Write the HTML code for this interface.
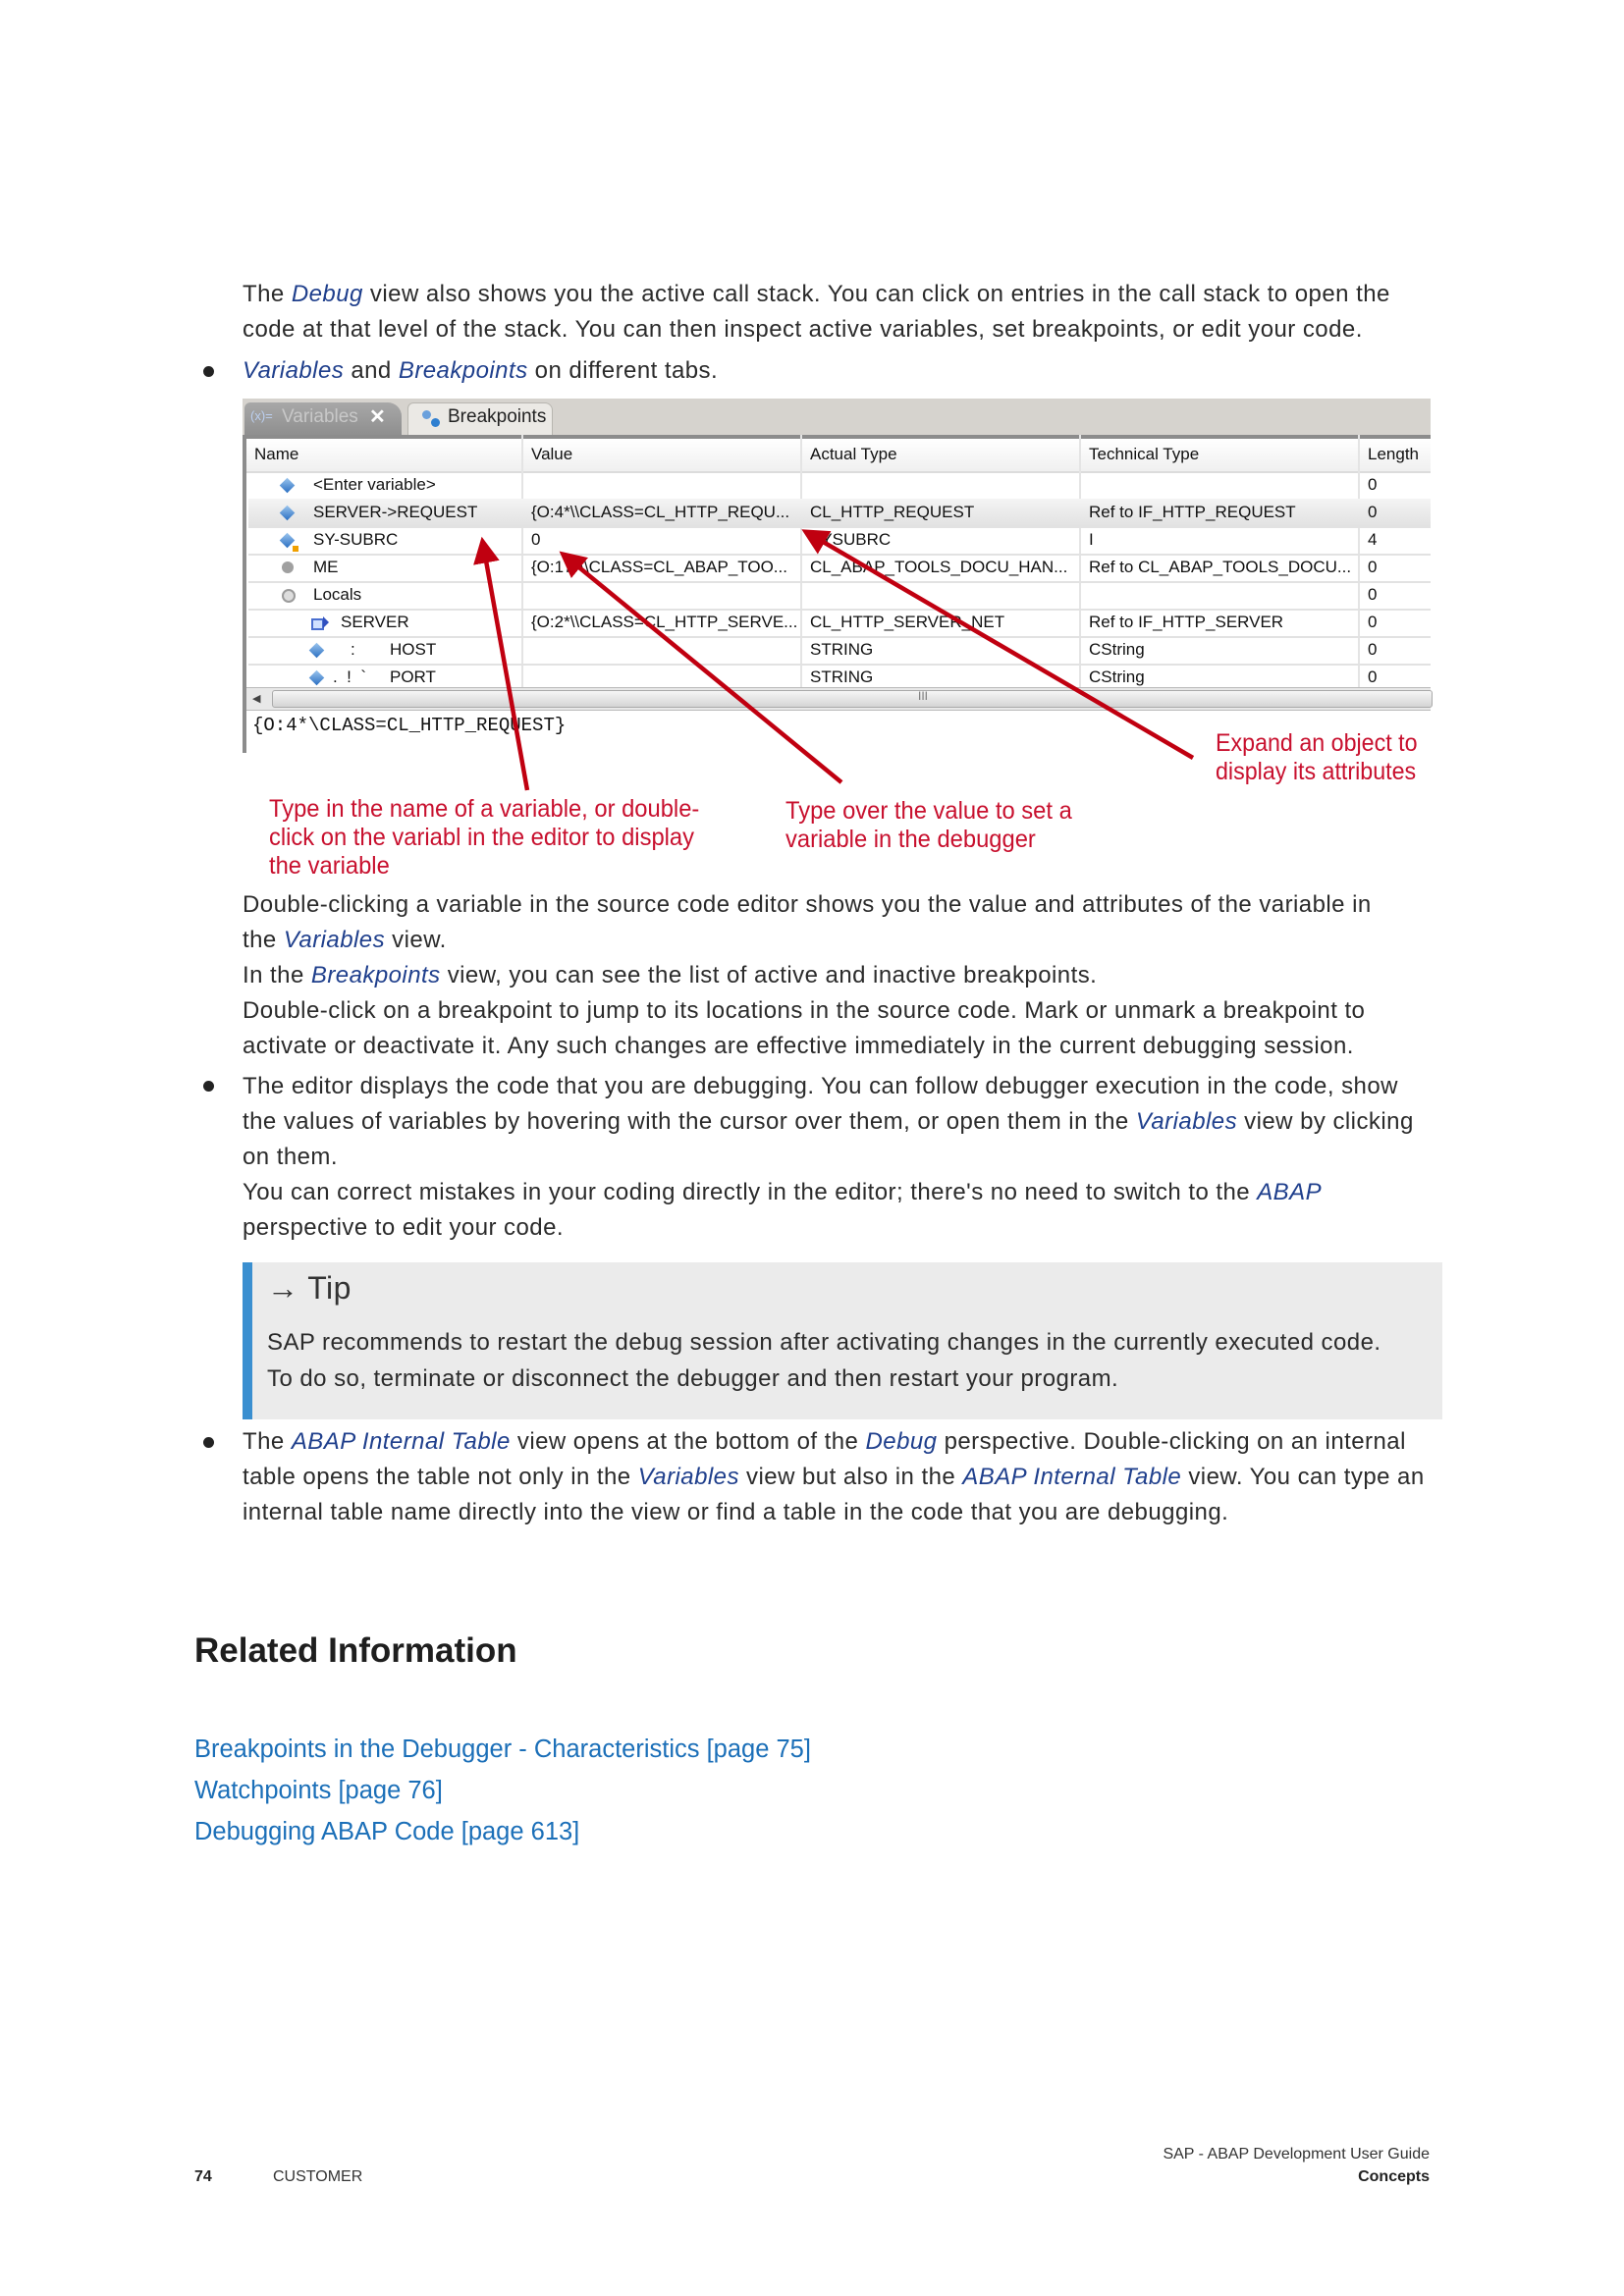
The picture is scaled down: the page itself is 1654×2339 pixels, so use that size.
<!DOCTYPE html>
<html><head><meta charset="utf-8">
<style>
html,body{margin:0;padding:0;background:#fff;}
body{width:1654px;height:2339px;position:relative;overflow:hidden;font-family:"Liberation Sans",sans-serif;color:#2b2b2b;}
.l{position:absolute;left:247px;white-space:nowrap;font-size:24px;letter-spacing:0.45px;line-height:26px;}
.b{position:absolute;left:207px;width:11px;height:11px;border-radius:50%;background:#222;}
i{color:#1f3f8c;}
.tb{position:absolute;left:247px;top:406px;width:1222px;height:361px;}
.cell{position:absolute;font-size:17px;line-height:28px;color:#111;white-space:nowrap;}
.row{position:absolute;left:6px;width:1204px;height:28px;border-bottom:2px solid #e2e2e2;}
.vl{position:absolute;top:37px;width:2px;height:260px;background:#e4e4e4;}
.ic{position:absolute;width:11px;height:11px;transform:rotate(45deg);background:linear-gradient(135deg,#9cc6ee,#2a6fc2);}
.red{position:absolute;color:#c8102e;font-size:25px;line-height:29px;white-space:nowrap;transform:scaleX(0.95);transform-origin:left top;}
.lk{position:absolute;left:198px;font-size:25.5px;color:#1b6fb8;white-space:nowrap;}
</style></head><body>

<div class="l" style="top:287px">The <i>Debug</i> view also shows you the active call stack. You can click on entries in the call stack to open the</div>
<div class="l" style="top:323px">code at that level of the stack. You can then inspect active variables, set breakpoints, or edit your code.</div>
<div class="b" style="top:373px"></div>
<div class="l" style="top:365px"><i>Variables</i> and <i>Breakpoints</i> on different tabs.</div>

<div class="tb">
  <div style="position:absolute;left:0;top:0;width:1210px;height:38px;background:#d6d3ce;"></div>
  <div style="position:absolute;left:2px;top:4px;width:160px;height:34px;background:linear-gradient(#a8a8a8,#8e8e8e);border-radius:6px 14px 0 0;"></div>
  <div style="position:absolute;left:8px;top:10px;font-size:13px;color:#bcd0f0;">(x)=</div>
  <div style="position:absolute;left:40px;top:8px;font-size:19px;color:#c8c8c8;">Variables</div>
  <div style="position:absolute;left:129px;top:6px;font-size:20px;color:#fff;font-weight:bold;">✕</div>
  <div style="position:absolute;left:168px;top:4px;width:146px;height:34px;background:#ebe9e5;border-radius:6px 8px 0 0;border:1px solid #b8b6b0;border-bottom:none;"></div>
  <div style="position:absolute;left:183px;top:12px;width:9px;height:9px;border-radius:50%;background:#6aa0dc;"></div>
  <div style="position:absolute;left:192px;top:20px;width:9px;height:9px;border-radius:50%;background:#2f7fd0;"></div>
  <div style="position:absolute;left:209px;top:8px;font-size:19px;color:#222;">Breakpoints</div>
  <div style="position:absolute;left:0;top:37px;width:1210px;height:4px;background:#8c8c8c;"></div>
  <div style="position:absolute;left:0;top:37px;width:4px;height:324px;background:#8c8c8c;"></div>
  <div style="position:absolute;left:4px;top:41px;width:1206px;height:33px;background:linear-gradient(#fff,#f0f0f0);border-bottom:2px solid #dcdcdc;"></div>
  <div class="vl" style="left:284px"></div><div class="vl" style="left:568px"></div><div class="vl" style="left:852px"></div><div class="vl" style="left:1136px"></div>
  <div class="cell" style="left:12px;top:43px">Name</div>
  <div class="cell" style="left:294px;top:43px">Value</div>
  <div class="cell" style="left:578px;top:43px">Actual Type</div>
  <div class="cell" style="left:862px;top:43px">Technical Type</div>
  <div class="cell" style="left:1146px;top:43px">Length</div>
  <div class="row" style="top:74px"></div>
  <div class="row" style="top:102px;background:linear-gradient(#f4f4f4,#e2e2e2);"></div>
  <div class="row" style="top:130px"></div>
  <div class="row" style="top:158px"></div>
  <div class="row" style="top:186px"></div>
  <div class="row" style="top:214px"></div>
  <div class="row" style="top:242px"></div>
  <div class="row" style="top:270px"></div>

  <div class="ic" style="left:40px;top:83px"></div><div class="cell" style="left:72px;top:74px">&lt;Enter variable&gt;</div>
  <div class="cell" style="left:1146px;top:74px">0</div>
  <div class="ic" style="left:40px;top:111px"></div><div class="cell" style="left:72px;top:102px">SERVER-&gt;REQUEST</div>
  <div class="cell" style="left:294px;top:102px">{O:4*\\CLASS=CL_HTTP_REQU...</div>
  <div class="cell" style="left:578px;top:102px">CL_HTTP_REQUEST</div>
  <div class="cell" style="left:862px;top:102px">Ref to IF_HTTP_REQUEST</div>
  <div class="cell" style="left:1146px;top:102px">0</div>
  <div class="ic" style="left:40px;top:139px"></div><div style="position:absolute;left:51px;top:150px;width:6px;height:6px;background:#f0a000;"></div>
  <div class="cell" style="left:72px;top:130px">SY-SUBRC</div>
  <div class="cell" style="left:294px;top:130px">0</div>
  <div class="cell" style="left:578px;top:130px">SYSUBRC</div>
  <div class="cell" style="left:862px;top:130px">I</div>
  <div class="cell" style="left:1146px;top:130px">4</div>
  <div style="position:absolute;left:40px;top:166px;width:12px;height:12px;border-radius:50%;background:#a0a0a0;"></div>
  <div class="cell" style="left:72px;top:158px">ME</div>
  <div class="cell" style="left:294px;top:158px">{O:17*\\CLASS=CL_ABAP_TOO...</div>
  <div class="cell" style="left:578px;top:158px">CL_ABAP_TOOLS_DOCU_HAN...</div>
  <div class="cell" style="left:862px;top:158px">Ref to CL_ABAP_TOOLS_DOCU...</div>
  <div class="cell" style="left:1146px;top:158px">0</div>
  <div style="position:absolute;left:40px;top:194px;width:10px;height:10px;border-radius:50%;border:2px solid #9a9a9a;background:#ddd;"></div>
  <div class="cell" style="left:72px;top:186px">Locals</div>
  <div class="cell" style="left:1146px;top:186px">0</div>
  <div style="position:absolute;left:70px;top:224px;width:9px;height:8px;border:2px solid #4a6fd0;background:#cfe0ff;"></div>
  <div style="position:absolute;left:82px;top:222px;width:0;height:0;border-left:6px solid #3050c0;border-top:6px solid transparent;border-bottom:6px solid transparent;"></div>
  <div class="cell" style="left:100px;top:214px">SERVER</div>
  <div class="cell" style="left:294px;top:214px">{O:2*\\CLASS=CL_HTTP_SERVE...</div>
  <div class="cell" style="left:578px;top:214px">CL_HTTP_SERVER_NET</div>
  <div class="cell" style="left:862px;top:214px">Ref to IF_HTTP_SERVER</div>
  <div class="cell" style="left:1146px;top:214px">0</div>
  <div class="ic" style="left:70px;top:251px"></div><div class="cell" style="left:110px;top:242px">:</div><div class="cell" style="left:150px;top:242px">HOST</div>
  <div class="cell" style="left:578px;top:242px">STRING</div>
  <div class="cell" style="left:862px;top:242px">CString</div>
  <div class="cell" style="left:1146px;top:242px">0</div>
  <div class="ic" style="left:70px;top:279px"></div><div class="cell" style="left:92px;top:270px">. &nbsp;! &nbsp;`</div><div class="cell" style="left:150px;top:270px">PORT</div>
  <div class="cell" style="left:578px;top:270px">STRING</div>
  <div class="cell" style="left:862px;top:270px">CString</div>
  <div class="cell" style="left:1146px;top:270px">0</div>
  <div style="position:absolute;left:4px;top:294px;width:1206px;height:22px;background:#e8e8e8;border-top:1px solid #bbb;border-bottom:1px solid #bbb;"></div>
  <div style="position:absolute;left:30px;top:297px;width:1180px;height:16px;background:linear-gradient(#f6f6f6,#d4d4d4);border:1px solid #aaa;border-radius:3px;"></div>
  <div style="position:absolute;left:10px;top:299px;font-size:11px;color:#444;">◀</div>
  <div style="position:absolute;left:688px;top:296px;font-size:12px;color:#777;">III</div>
  <div style="position:absolute;left:10px;top:322px;font-family:'Liberation Mono',monospace;font-size:19px;color:#111;">{O:4*\CLASS=CL_HTTP_REQUEST}</div>
</div>

<svg style="position:absolute;left:0;top:0" width="1654" height="1000">
  <defs><marker id="ah" markerWidth="6" markerHeight="6" refX="3" refY="3" orient="auto"><path d="M0,0 L6,3 L0,6 Z" fill="#c00010"/></marker></defs>
  <g stroke="#c00010" stroke-width="4.5" fill="none" marker-end="url(#ah)">
    <line x1="537" y1="805" x2="493" y2="560"/>
    <line x1="857" y1="797" x2="580" y2="570"/>
    <line x1="1215" y1="772" x2="828" y2="546"/>
  </g>
</svg>

<div class="red" style="left:1238px;top:743px;transform:scaleX(0.93)">Expand an object to</div>
<div class="red" style="left:1238px;top:772px;transform:scaleX(0.93)">display its attributes</div>
<div class="red" style="left:274px;top:810px">Type in the name of a variable, or double-</div>
<div class="red" style="left:274px;top:839px">click on the variabl in the editor to display</div>
<div class="red" style="left:274px;top:868px">the variable</div>
<div class="red" style="left:800px;top:812px">Type over the value to set a</div>
<div class="red" style="left:800px;top:841px">variable in the debugger</div>

<div class="l" style="top:909px">Double-clicking a variable in the source code editor shows you the value and attributes of the variable in</div>
<div class="l" style="top:945px">the <i>Variables</i> view.</div>
<div class="l" style="top:981px">In the <i>Breakpoints</i> view, you can see the list of active and inactive breakpoints.</div>
<div class="l" style="top:1017px">Double-click on a breakpoint to jump to its locations in the source code. Mark or unmark a breakpoint to</div>
<div class="l" style="top:1053px">activate or deactivate it. Any such changes are effective immediately in the current debugging session.</div>
<div class="b" style="top:1101px"></div>
<div class="l" style="top:1094px">The editor displays the code that you are debugging. You can follow debugger execution in the code, show</div>
<div class="l" style="top:1130px">the values of variables by hovering with the cursor over them, or open them in the <i>Variables</i> view by clicking</div>
<div class="l" style="top:1166px">on them.</div>
<div class="l" style="top:1202px">You can correct mistakes in your coding directly in the editor; there's no need to switch to the <i>ABAP</i></div>
<div class="l" style="top:1238px">perspective to edit your code.</div>

<div style="position:absolute;left:247px;top:1286px;width:1222px;height:160px;background:#ebebeb;"></div>
<div style="position:absolute;left:247px;top:1286px;width:10px;height:160px;background:#3a8fd0;"></div>
<div class="l" style="left:272px;top:1294px;font-size:32px;line-height:36px;color:#333;"><b style="font-weight:bold">→</b> Tip</div>
<div class="l" style="left:272px;top:1355px">SAP recommends to restart the debug session after activating changes in the currently executed code.</div>
<div class="l" style="left:272px;top:1392px">To do so, terminate or disconnect the debugger and then restart your program.</div>

<div class="b" style="top:1464px"></div>
<div class="l" style="top:1456px">The <i>ABAP Internal Table</i> view opens at the bottom of the <i>Debug</i> perspective. Double-clicking on an internal</div>
<div class="l" style="top:1492px">table opens the table not only in the <i>Variables</i> view but also in the <i>ABAP Internal Table</i> view. You can type an</div>
<div class="l" style="top:1528px">internal table name directly into the view or find a table in the code that you are debugging.</div>

<div style="position:absolute;left:198px;top:1662px;font-size:35px;font-weight:bold;color:#1e1e1e;white-space:nowrap;">Related Information</div>
<div class="lk" style="top:1768px">Breakpoints in the Debugger - Characteristics [page 75]</div>
<div class="lk" style="top:1810px">Watchpoints [page 76]</div>
<div class="lk" style="top:1852px">Debugging ABAP Code [page 613]</div>

<div style="position:absolute;left:198px;top:2209px;font-size:16px;font-weight:bold;color:#222;">74</div>
<div style="position:absolute;left:278px;top:2209px;font-size:16px;color:#333;">CUSTOMER</div>
<div style="position:absolute;right:198px;top:2186px;font-size:16px;color:#333;white-space:nowrap;">SAP - ABAP Development User Guide</div>
<div style="position:absolute;right:198px;top:2209px;font-size:16px;font-weight:bold;color:#222;">Concepts</div>
</body></html>
